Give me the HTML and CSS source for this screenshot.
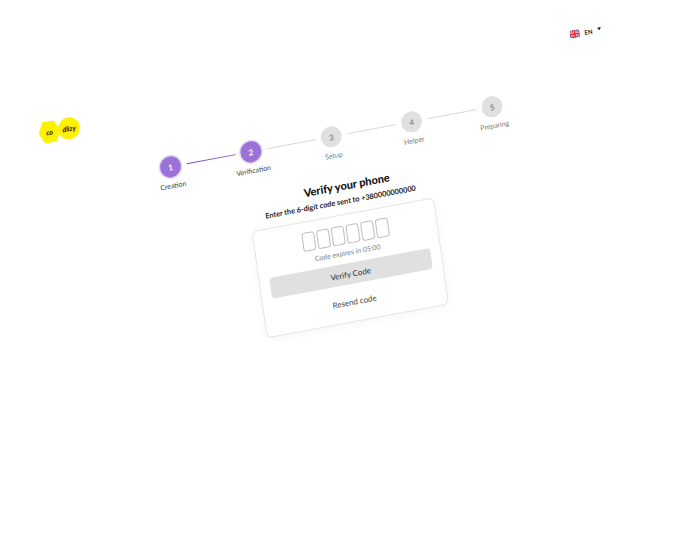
FILE: index.html
```html
<!DOCTYPE html>
<html lang="en">
<head>
    <meta charset="UTF-8">
    <meta name="viewport" content="width=device-width, initial-scale=1.0">
    <title>Verify your phone</title>
    <link rel="stylesheet" href="styles.css">
</head>
<body>
    <div class="page">
        <header class="topbar">
            <div class="logo">
                <span class="logo-hex">co</span>
                <span class="logo-dot">dlizy</span>
            </div>
            <div class="lang">
                <svg class="flag" viewBox="0 0 20 16">
                    <rect width="20" height="16" rx="4" fill="#2b3f8f"/>
                    <path d="M1 1l18 14M19 1L1 15" stroke="#fff" stroke-width="3"/>
                    <path d="M1 1l18 14M19 1L1 15" stroke="#e3212f" stroke-width="1.6"/>
                    <path d="M10 0v16M0 8h20" stroke="#fff" stroke-width="5"/>
                    <path d="M10 0v16M0 8h20" stroke="#e3212f" stroke-width="3.4"/>
                </svg>
                <span class="lang-code">EN</span>
                <span class="lang-caret"></span>
            </div>
        </header>

        <div class="stepper">
            <div class="step done"><span class="circle">1</span><span class="step-label">Creation</span></div>
            <span class="line active"></span>
            <div class="step done"><span class="circle">2</span><span class="step-label">Verification</span></div>
            <span class="line"></span>
            <div class="step"><span class="circle">3</span><span class="step-label">Setup</span></div>
            <span class="line"></span>
            <div class="step"><span class="circle">4</span><span class="step-label">Helper</span></div>
            <span class="line"></span>
            <div class="step"><span class="circle">5</span><span class="step-label">Preparing</span></div>
        </div>

        <h1 class="title">Verify your phone</h1>
        <p class="subtitle">Enter the 6-digit code sent to +380000000000</p>

        <div class="card">
            <div class="code-boxes">
                <span class="code-box"></span>
                <span class="code-box"></span>
                <span class="code-box"></span>
                <span class="code-box"></span>
                <span class="code-box"></span>
                <span class="code-box"></span>
            </div>
            <p class="expires">Code expires in 05:00</p>
            <button class="verify">Verify Code</button>
            <button class="resend">Resend code</button>
        </div>
    </div>
</body>
</html>
```
FILE: styles.css
```css
html, body {
    margin: 0;
    height: 100%;
    overflow: hidden;
    background-color: #ffffff;
}
.page {
    width: 689px;
    height: 556px;
    padding-top: 20px;
    box-sizing: border-box;
    display: flex;
    flex-direction: column;
    align-items: center;
    font-family: Lato, sans-serif;
    color: #222222;
    transform-origin: 0 0;
    transform: matrix(0.98, -0.183, 0.14, 0.99, -18.6, 113.2);
}
.topbar {
    width: 100%;
    height: 22px;
    display: flex;
    justify-content: space-between;
    align-items: center;
    padding: 0 61px 0 54px;
    box-sizing: border-box;
}
.logo {
    display: flex;
    align-items: center;
}
.logo-hex, .logo-dot {
    width: 22px;
    height: 22px;
    display: flex;
    align-items: center;
    justify-content: center;
    background-color: #fff200;
    font-size: 7px;
    font-weight: 700;
    font-style: italic;
    color: #111111;
}
.logo-hex {
    clip-path: polygon(25% 0, 78% 4%, 100% 50%, 78% 96%, 25% 100%, 0 50%);
}
.logo-dot {
    border-radius: 50%;
    margin-left: -2px;
}
.lang {
    display: flex;
    align-items: center;
    gap: 4px;
}
.flag {
    width: 10px;
    height: 8px;
    margin-right: 1px;
}
.lang-code {
    font-size: 6px;
    font-weight: 700;
    margin-right: 1px;
}
.lang-caret {
    width: 0;
    height: 0;
    border-left: 2px solid transparent;
    border-right: 2px solid transparent;
    border-top: 3px solid #222222;
    margin-top: -2px;
}
.stepper {
    display: flex;
    margin-top: 35px;
}
.step {
    width: 20px;
    display: flex;
    flex-direction: column;
    align-items: center;
}
.circle {
    width: 21px;
    height: 21px;
    flex: none;
    border-radius: 50%;
    display: flex;
    align-items: center;
    justify-content: center;
    background-color: #e0e0e0;
    color: #8a8a8a;
    font-size: 8px;
    font-weight: 700;
}
.done .circle {
    background-color: #9b72d8;
    color: #ffffff;
    box-shadow: 0 0 0 1.5px #e4d8f5;
}
.step-label {
    margin-top: 4px;
    font-size: 7px;
    line-height: 9px;
    white-space: nowrap;
    color: #808080;
}
.done .step-label {
    color: #444444;
}
.line {
    width: 50px;
    height: 1px;
    margin: 10px 6px 0;
    background-color: #d8d8d8;
}
.line.active {
    background-color: #7c4fc9;
}
.title {
    margin: 19px 0 0 17px;
    font-size: 11px;
    line-height: 16px;
    font-weight: 900;
    color: #111111;
}
.subtitle {
    margin: 2px 0 0;
    font-size: 7.4px;
    line-height: 11px;
    font-weight: 700;
    color: #222222;
}
.card {
    width: 186px;
    height: 108px;
    margin-top: 7px;
    padding: 10px 10px 0;
    box-sizing: border-box;
    display: flex;
    flex-direction: column;
    align-items: center;
    background-color: #ffffff;
    border: 1px solid #e6e6e6;
    border-radius: 6px;
    box-shadow: 0 2px 8px rgba(0, 0, 0, 0.04);
}
.code-boxes {
    display: flex;
    gap: 2px;
}
.code-box {
    width: 13px;
    height: 19px;
    box-sizing: border-box;
    border: 1px solid #bdbdbd;
    border-radius: 3px;
}
.expires {
    margin: 4px 0 0;
    font-size: 7px;
    line-height: 8px;
    color: #808080;
}
.verify {
    width: 100%;
    height: 21px;
    flex: none;
    margin-top: 7px;
    border: none;
    border-radius: 4px;
    background-color: #e0e0e0;
    color: #333333;
    font-family: inherit;
    font-size: 8px;
}
.resend {
    margin-top: 10px;
    padding: 3px;
    border: none;
    background: none;
    color: #444444;
    font-family: inherit;
    font-size: 8px;
}
```
